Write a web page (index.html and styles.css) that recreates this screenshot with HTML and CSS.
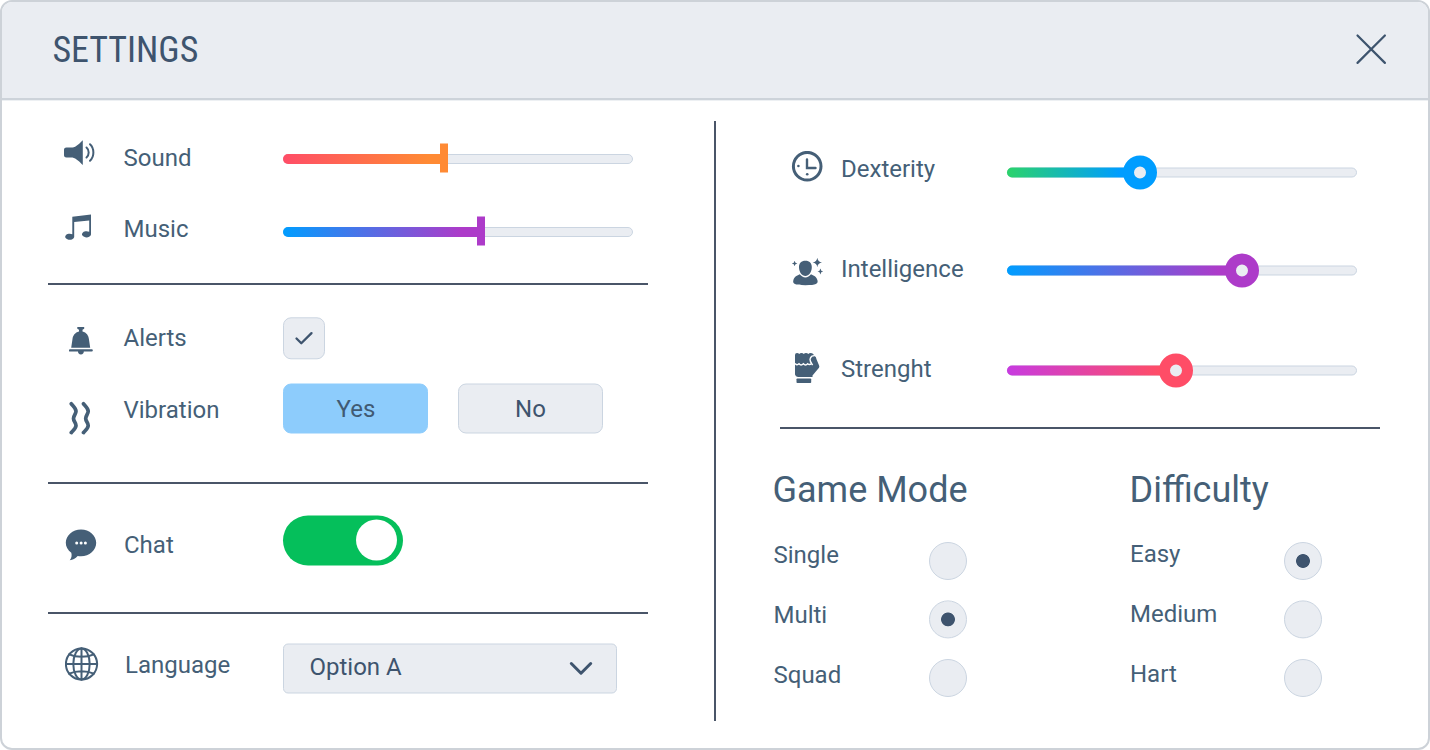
FILE: index.html
```html
<!DOCTYPE html>
<html lang="en">
<head>
<meta charset="utf-8">
<title>Settings</title>
<link rel="stylesheet" href="styles.css">
</head>
<body>
<main class="window">
  <header class="header">
    <h1 class="title">SETTINGS</h1>
    <svg class="close" width="32" height="32" viewBox="0 0 32 32"><path d="M2.500 2.500 29.900 29.900M29.900 2.500 2.500 29.900"/></svg>
  </header>
  <div class="body">
    <section class="left">
      <div class="group group-audio">
        <div class="row row-sound">
          <svg class="icon" width="32" height="26" viewBox="0 0 32 26"><path d="M2.500 7.600H8.500C12 7 16 3 18.800.2V25C16 22 12 18 8.500 17.400H2.500C.6 17.400 0 16.400 0 15V10C0 8.600.6 7.600 2.500 7.600Z"/><path class="line w20" d="M22.500 7.500C25.400 10 25.400 15 22.500 17.500M26 4.300C30.500 8.500 30.500 16.500 26 20.700"/></svg>
          <span class="label">Sound</span>
          <div class="slider bar orange"><i class="fill" style="width:161px"></i><i class="thumb" style="left:157px"></i></div>
        </div>
        <div class="row row-music">
          <svg class="icon" width="27" height="26" viewBox="0 0 27 26"><path d="M7.300 2.700 26 .4V20.500A4.500 3.100 0 1 1 24.200 17.800V6.400L9.200 8V23A4.500 3.100 0 1 1 7.300 20.200Z"/></svg>
          <span class="label">Music</span>
          <div class="slider bar purple"><i class="fill" style="width:198px"></i><i class="thumb" style="left:194px"></i></div>
        </div>
      </div>
      <div class="group group-feedback">
        <div class="row row-alerts">
          <svg class="icon" width="24" height="28" viewBox="0 0 24 28"><path d="M8.300 0H15.200V1.800L13.500 2.700V4.400C17.500 5.300 19.600 8.500 19.900 12L21.200 20.800H2.200L3.500 12C3.900 8.500 6 5.300 10 4.400V2.700L8.300 1.800ZM1 22.300H22.700A1.100 1.100 0 0 1 22.700 24.600H14.800A2.900 2.800 0 0 1 9 24.600H1A1.100 1.100 0 0 1 1 22.300Z"/></svg>
          <span class="label">Alerts</span>
          <div class="checkbox"><svg width="20" height="16" viewBox="0 0 20 16"><path d="M2.500 8.200 7.300 13 17.500 2.800"/></svg></div>
        </div>
        <div class="row row-vibration">
          <svg class="icon" width="24" height="34" viewBox="0 0 24 34"><path class="line w36" d="M2.300 2.800C3.800 4.800 7 7 7 10.200C7 13 4.500 14.500 4.500 17.500C4.500 20.500 7 21.500 7 24.500C7 27.500 3.800 29.500 2.300 31.600M14.500 2.800C16 4.800 19.200 7 19.200 10.200C19.200 13 16.700 14.500 16.700 17.500C16.700 20.500 19.200 21.500 19.200 24.500C19.200 27.500 16 29.500 14.500 31.600"/></svg>
          <span class="label">Vibration</span>
          <div class="buttons"><span class="button on">Yes</span><span class="button">No</span></div>
        </div>
      </div>
      <div class="group group-chat">
        <div class="row row-chat">
          <svg class="icon" width="32" height="32" viewBox="0 0 32 32"><path d="M16 .4C24.500.4 31.200 6.400 31.200 13.800C31.200 21.300 24.500 27.300 16 27.300C14.800 27.300 13.700 27.200 12.700 27C10.300 29.400 7.800 31 4.800 31.200C6.600 28.800 7 26.500 6.300 23.700C2.900 21.300.8 17.800.8 13.800C.8 6.400 7.500.4 16 .4Z"/><g class="dots"><circle cx="11.700" cy="14" r="1.500"/><circle cx="16.100" cy="14" r="1.500"/><circle cx="20.400" cy="14" r="1.500"/></g></svg>
          <span class="label">Chat</span>
          <div class="toggle"><i class="knob"></i></div>
        </div>
      </div>
      <div class="row row-language">
        <svg class="icon" width="34" height="34" viewBox="0 0 34 34"><g class="line w20"><circle cx="16.500" cy="17" r="15.600"/><ellipse cx="16.500" cy="17" rx="8.200" ry="15.600"/><path d="M16.500 1.300V32.700M.8 17H32.200M4.200 7.300C11 10.600 22 10.600 28.800 7.300M4.200 26.700C11 23.400 22 23.400 28.800 26.700"/></g></svg>
        <span class="label">Language</span>
        <div class="select"><span>Option A</span><svg width="24" height="16" viewBox="0 0 24 16"><path d="M2.300 3 12 12.700 21.700 3"/></svg></div>
      </div>
    </section>
    <div class="separator"></div>
    <section class="right">
      <div class="stats">
        <div class="row row-dexterity">
          <svg class="icon" width="32" height="32" viewBox="0 0 32 32"><circle class="line w30" cx="16.200" cy="15.200" r="13.800"/><path class="line w24" d="M16 8.500V17H24.500"/><circle cx="7.400" cy="15" r="1.300"/><circle cx="16.200" cy="23.300" r="1.300"/></svg>
          <span class="label">Dexterity</span>
          <div class="slider ring blue"><i class="fill" style="width:133px"></i><i class="thumb" style="left:116px"></i></div>
        </div>
        <div class="row row-intelligence">
          <svg class="icon" width="34" height="30" viewBox="0 0 34 30"><path d="M14.400 4.800C18.500 4.800 21 7.500 20.800 11.500C20.600 16 18 19.900 14.400 19.900C10.800 19.900 8.200 16 8 11.500C7.800 7.500 10.300 4.800 14.400 4.800ZM8.800 18.300C10.300 20.400 12.200 21.400 14.400 21.400C16.600 21.400 18.500 20.400 20 18.300C22.500 19.500 25.600 20.500 26.500 24.500C27.200 27.500 25.500 29.200 14.400 29.200C3.300 29.200 1.600 27.500 2.300 24.500C3.200 20.500 6.300 19.500 8.800 18.300Z"/><path d="M26.300 1.800Q26.800 6 31 6.500Q26.800 7 26.300 11.200Q25.800 7 21.600 6.500Q25.800 6 26.300 1.800ZM3.600 4.700Q3.900 7.200 6.400 7.500Q3.900 7.800 3.600 10.300Q3.300 7.800.8 7.500Q3.300 7.200 3.600 4.700ZM29.400 12.600Q29.700 15.200 32.300 15.500Q29.700 15.800 29.400 18.400Q29.100 15.800 26.500 15.500Q29.100 15.200 29.400 12.600Z"/></svg>
          <span class="label">Intelligence</span>
          <div class="slider ring purple"><i class="fill" style="width:235px"></i><i class="thumb" style="left:218px"></i></div>
        </div>
        <div class="row row-strength">
          <svg class="icon" width="26" height="32" viewBox="0 0 26 32"><path d="M0 3Q0 1 2 1Q3.500 1 4.200 1.900Q5 1 6.500 1Q8 1 8.800 1.900Q9.600 1 11 1Q12.500 1 13.300 1.900Q14.100 1 15.600 1Q18.500 1 19 3.800Q21.300 4.300 21.600 7.500L24 13.300Q24.700 14.500 24 15.700L17.500 23.500V25H3Q.5 24.500 0 22.500Z"/><rect x="1.500" y="26.400" width="14.700" height="4.600" rx=".8"/><path class="cut" d="M0 11.500Q2 13.800 4 11.800Q6 14.200 8.400 11.800Q10.500 14.200 12.700 11.800Q14.500 13.400 16.600 11.500Q14.500 8.500 15.200 6.500Q16 3.600 19.500 3.600M16.600 11.500 17.600 13.200"/></svg>
          <span class="label">Strenght</span>
          <div class="slider ring red"><i class="fill" style="width:169px"></i><i class="thumb" style="left:152px"></i></div>
        </div>
      </div>
      <div class="choices">
        <div class="choice mode">
          <h2>Game Mode</h2>
          <div class="options">
            <div class="option"><span class="label">Single</span><i class="radio"></i></div>
            <div class="option"><span class="label">Multi</span><i class="radio checked"></i></div>
            <div class="option"><span class="label">Squad</span><i class="radio"></i></div>
          </div>
        </div>
        <div class="choice difficulty">
          <h2>Difficulty</h2>
          <div class="options">
            <div class="option"><span class="label">Easy</span><i class="radio checked"></i></div>
            <div class="option"><span class="label">Medium</span><i class="radio"></i></div>
            <div class="option"><span class="label">Hart</span><i class="radio"></i></div>
          </div>
        </div>
      </div>
    </section>
  </div>
</main>
</body>
</html>
```
FILE: styles.css
```css
*, *::before { box-sizing: border-box; }
body {
  margin: 0;
  background: #fff;
  color: #455f77;
  font-family: Roboto, "Liberation Sans", sans-serif;
  font-size: 24px;
  line-height: 28px;
}
i { display: block; }
.window {
  width: 1430px;
  height: 750px;
  border: 2px solid #cdd2d8;
  border-radius: 12px;
  overflow: hidden;
  background: #fff;
}
.header {
  display: flex;
  justify-content: space-between;
  align-items: flex-start;
  height: 98px;
  padding: 26px 41px 0 50.400px;
  background: #eaedf2;
  border-bottom: 2px solid #cdd3da;
  box-shadow: 0 1px 0 #edf0f3;
}
.title {
  margin: 1px 0 0;
  color: #3e546e;
  font-family: "Roboto Condensed", Roboto, sans-serif;
  font-stretch: 75%;
  font-weight: 400;
  font-size: 36px;
  line-height: 42px;
}
.close { margin-top: 5px; fill: none; stroke: #3e546e; stroke-width: 2.2; stroke-linecap: round; }
.body { display: flex; height: 648px; }
.left { width: 712px; padding: 35px 66px 0 46px; }
.separator { width: 2px; height: 600px; margin-top: 21px; background: #4a5568; }
.right { flex: 1; padding-top: 50px; }

.group { border-bottom: 2px solid #4a5568; }
.row { display: flex; align-items: flex-start; }
.left .row { display: grid; grid-template-columns: 76px 159px auto; justify-content: start; }
.icon { display: block; fill: #455f77; }
.line { fill: none; stroke: #455f77; stroke-linecap: round; }
.w20 { stroke-width: 2; }
.w24 { stroke-width: 2.4; }
.w30 { stroke-width: 3; }
.w36 { stroke-width: 3.7; }
.dots { fill: #fff; }
.cut { fill: none; stroke: #fff; stroke-width: 1.4; }

.row-sound { height: 72px; }
.row-sound .icon { margin: 5px 0 0 16px; }
.row-sound .label { margin-top: 9px; }
.row-sound .slider { margin-top: 8px; }
.row-music { height: 76px; }
.row-music .icon { margin: 7px 0 0 17px; }
.row-music .label { margin-top: 9px; }
.row-music .slider { margin-top: 9px; }
.group-audio .label { transform: translate(-.5px, -.4px); }
.group-feedback .label { transform: translateX(-.5px); }
.group-feedback { padding-top: 30px; }
.row-alerts { height: 65px; }
.row-alerts .icon { margin: 12px 0 0 21px; }
.row-alerts .label { margin-top: 9px; }
.row-vibration { height: 102px; }
.row-vibration .icon { margin: 21px 0 0 21px; }
.row-vibration .label { margin-top: 16px; }
.row-music .label { transform: translate(-.5px, -1px); }
.row-chat { height: 128px; }
.row-chat .icon { margin: 45px 0 0 17px; }
.row-chat .label { margin-top: 47px; }
.row-language .icon { margin: 33px 0 0 17px; }
.row-language .label { margin: 37px 0 0 1px; }

.slider { position: relative; width: 350px; height: 30px; padding-top: 11px; }
.slider::before {
  content: "";
  display: block;
  height: 10px;
  background: #eaedf2;
  border: 1px solid #cbd5e1;
  border-radius: 5px;
}
.fill { position: absolute; left: 0; top: 11px; height: 10px; border-radius: 5px 0 0 5px; }
.thumb { position: absolute; }
.bar .thumb { top: 0; width: 8px; height: 29px; transform: translateY(.5px); }
.ring { height: 34px; padding-top: 12px; transform: translateY(.5px); }
.ring .fill { top: 12px; }
.ring .thumb { top: 0; width: 34px; height: 34px; border: 11px solid; border-radius: 50%; background: #eaedf2; }
.orange .fill { background: linear-gradient(90deg, #ff4d67, #ff8a34 90%); }
.orange .thumb { background: #ff8a34; }
.purple .fill { background: linear-gradient(90deg, #009dff, #ad3bc9 90%); }
.bar.purple .thumb { background: #ad3bc9; }
.ring.purple .thumb { border-color: #ad3bc9; }
.blue .fill { background: linear-gradient(90deg, #2bd36b, #009dff 85%); }
.blue .thumb { border-color: #009dff; }
.red .fill { background: linear-gradient(90deg, #c73be0, #ff4d67 90%); }
.red .thumb { border-color: #ff4d67; }

.checkbox {
  display: grid;
  place-items: center;
  width: 42px;
  height: 42px;
  margin-top: 2px;
  background: #eaedf2;
  border: 1px solid #cbd5e1;
  border-radius: 8px;
  transform: translateY(.3px);
}
.checkbox svg { fill: none; stroke: #3e546e; stroke-width: 2.3; stroke-linecap: round; stroke-linejoin: round; }
.buttons { display: flex; gap: 30px; margin-top: 3px; transform: translateY(.5px); }
.button {
  width: 145px;
  height: 50px;
  border: 1px solid #cbd5e1;
  border-radius: 8px;
  background: #eaedf2;
  color: #3e546e;
  line-height: 48px;
  text-align: center;
}
.button.on { padding-left: 1px; background: #8dccfc; border-color: #8dccfc; color: #405a73; }
.toggle {
  width: 120px;
  height: 50px;
  margin-top: 31px;
  padding: 4px 6px 0 73px;
  background: #05bf5b;
  border-radius: 25px;
  transform: translateY(.5px);
}
.knob { width: 41px; height: 41px; border-radius: 50%; background: #fff; }
.select {
  display: flex;
  justify-content: space-between;
  width: 334px;
  height: 50px;
  margin-top: 29px;
  padding: 8px 23px 0 25.500px;
  background: #eaedf2;
  border: 1px solid #cbd5e1;
  border-radius: 5px;
  color: #3e546e;
  transform: translateY(.5px);
}
.select svg { margin-top: 8px; fill: none; stroke: #3e546e; stroke-width: 3; stroke-linecap: round; stroke-linejoin: round; }

.stats { width: 600px; height: 279px; margin-left: 64px; border-bottom: 2px solid #4a5568; }
.stats .row { display: grid; grid-template-columns: 61px 166px 350px; height: 100px; }
.stats .label { margin-top: 5px; }
.row-dexterity .icon { margin: 1px 0 0 11px; }
.row-dexterity .slider { margin-top: 5px; }
.row-intelligence .icon { margin: 6px 0 0 11px; }
.row-intelligence .slider { margin-top: 3px; }
.row-strength .icon { margin: 2px 0 0 15px; }
.row-strength .slider { margin-top: 3px; }

.choices { display: grid; grid-template-columns: 357px 194px; padding: 40px 0 0 57px; }
.choice h2 { margin: 0 0 0 -.5px; font-weight: 400; font-size: 36px; line-height: 42px; }
.options { display: flex; flex-direction: column; padding-top: 31px; }
.option { display: flex; justify-content: space-between; width: 194px; height: 58.4px; }
.difficulty .option { width: 192px; }
.mode .option:nth-child(1) .label { margin-top: -1px; }
.mode .option:nth-child(2) .label { margin-top: .4px; }
.mode .option:nth-child(3) .label { margin-top: 2px; }
.mode .option .label { transform: translateX(.5px); }
.difficulty .option:nth-child(1) .label { margin-top: -2px; }
.difficulty .option:nth-child(2) .label { margin-top: -.6px; }
.difficulty .option:nth-child(3) .label { margin-top: 1px; }
.option:nth-child(2) .radio { transform: translateY(.4px); }
.radio { width: 38px; height: 38px; border: 1px solid #cbd5e1; border-radius: 50%; background: #eaedf2; }
.checked { background: radial-gradient(circle, #3e546e 6.500px, #eaedf2 7.300px); }
```
